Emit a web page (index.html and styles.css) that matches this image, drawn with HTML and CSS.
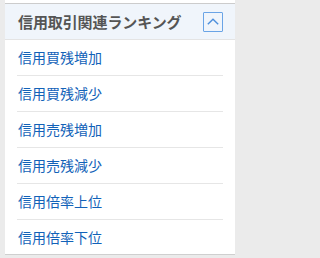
FILE: index.html
```html
<!DOCTYPE html>
<html lang="ja">
<head>
<meta charset="utf-8">
<link rel="stylesheet" href="styles.css">
</head>
<body>
<div class="page">
  <section class="card">
    <header class="card-head">
      <h2 class="card-title">信用取引関連ランキング</h2>
      <button class="toggle" type="button" aria-label="閉じる">
        <svg width="12" height="7" viewBox="0 0 12 7"><path d="M0.8 6.2 L6 1.2 L11.2 6.2" fill="none" stroke="#4d8fdc" stroke-width="1.4"/></svg>
      </button>
    </header>
    <ul class="rank-list">
      <li class="rank-item"><a href="#">信用買残増加</a></li>
      <li class="rank-item"><a href="#">信用買残減少</a></li>
      <li class="rank-item"><a href="#">信用売残増加</a></li>
      <li class="rank-item"><a href="#">信用売残減少</a></li>
      <li class="rank-item"><a href="#">信用倍率上位</a></li>
      <li class="rank-item"><a href="#">信用倍率下位</a></li>
    </ul>
  </section>
</div>
</body>
</html>
```

FILE: styles.css
```css
html, body {
  margin: 0;
  padding: 0;
  background: #ebebeb;
  font-family: "Noto Sans CJK JP", "Noto Sans", sans-serif;
}
.page {
  width: 238px;
  box-sizing: border-box;
  padding: 0 3px 0 5px;
  height: 258px;
  overflow: hidden;
}
.card {
  background: #ffffff;
  padding-top: 3px;
  border-bottom: 1px solid #cfcfcf;
}
.card-head {
  display: flex;
  align-items: center;
  justify-content: space-between;
  height: 37px;
  box-sizing: border-box;
  border-top: 1px solid #cccccc;
  border-bottom: 1px solid #e4e4e4;
  background: #f0f5fb;
  padding: 0 12px 0 13px;
}
.card-title {
  margin: 0;
  font-size: 15px;
  font-weight: bold;
  color: #555555;
  line-height: 1;
  letter-spacing: -0.1px;
}
.toggle {
  width: 20px;
  height: 20px;
  box-sizing: border-box;
  border: 1px solid #6aa4e6;
  border-radius: 1px;
  background: transparent;
  padding: 0;
  display: flex;
  align-items: center;
  justify-content: center;
}
.toggle svg { display: block; margin-top: -1px; }
.rank-list {
  list-style: none;
  margin: 0;
  padding: 0;
}
.rank-item {
  margin: 0 12px;
  height: 36px;
  box-sizing: border-box;
  border-bottom: 1px solid #e6e6e6;
  display: flex;
  align-items: center;
  padding: 0 0 2px 1px;
}
.rank-item:last-child {
  border-bottom: none;
  height: 34px;
  padding-bottom: 0;
}
.rank-item a {
  color: #1262b8;
  text-decoration: none;
  font-size: 14px;
  line-height: 1;
}
```
